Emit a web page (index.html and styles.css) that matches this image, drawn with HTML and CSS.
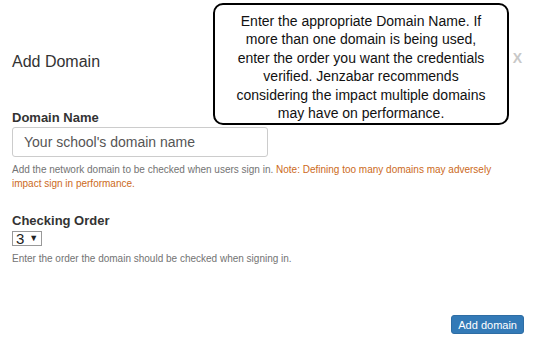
FILE: index.html
```html
<!DOCTYPE html>
<html lang="en">
<head>
    <meta charset="UTF-8">
    <title>Add Domain</title>
    <link rel="stylesheet" href="styles.css">
</head>
<body>
    <div class="modal">
        <div class="modal-header">
            <h4 class="modal-title">Add Domain</h4>
            <span class="close">X</span>
        </div>

        <div class="modal-body">
            <div class="form-group">
                <label for="domainName">Domain Name</label>
                <input type="text" id="domainName" placeholder="Your school's domain name">
                <p class="help">Add the network domain to be checked when users sign in. <span class="note">Note: Defining too many domains may adversely impact sign in performance.</span></p>
            </div>

            <div class="form-group order">
                <label for="checkingOrder">Checking Order</label>
                <div class="select-box" id="checkingOrder">
                    <span>3</span>
                    <span class="arrow">&#9660;</span>
                </div>
                <p class="help">Enter the order the domain should be checked when signing in.</p>
            </div>
        </div>

        <div class="modal-footer">
            <button class="btn-primary">Add domain</button>
        </div>
    </div>

    <div class="callout">
        Enter the appropriate Domain Name. If<br>
        more than one domain is being used,<br>
        enter the order you want the credentials<br>
        verified. Jenzabar recommends<br>
        considering the impact multiple domains<br>
        may have on performance.
    </div>
</body>
</html>
```

FILE: styles.css
```css
body {
    margin: 0;
    width: 536px;
    height: 348px;
    background: #fff;
    font-family: Arial, "Liberation Sans", sans-serif;
    color: #333;
    overflow: hidden;
}

.modal {
    margin-top: 30px;
}

.modal-header {
    display: flex;
    align-items: center;
    padding: 22px 14px 15px 12px;
}

.modal-title {
    margin: 0;
    font-size: 16px;
    font-weight: normal;
    line-height: 19px;
}

.close {
    margin-left: auto;
    margin-top: -7px;
    font-size: 14px;
    font-weight: bold;
    color: #c8c8c8;
}

.modal-body {
    padding: 24px 12px 0;
}

.form-group label {
    display: block;
    font-size: 13px;
    font-weight: bold;
    line-height: 15px;
    margin-bottom: 2px;
}

.form-group input {
    display: block;
    box-sizing: border-box;
    width: 256px;
    height: 30px;
    padding: 0 11px;
    border: 1px solid #ccc;
    border-radius: 3px;
    font-family: inherit;
    font-size: 14px;
}

.form-group input::placeholder {
    color: #555;
}

.help {
    max-width: 505px;
    margin: 6px 0 0;
    font-size: 10px;
    line-height: 14px;
    color: #737373;
}

.note {
    color: #cc6a22;
}

.order {
    margin-top: 22px;
}

.order label {
    margin-bottom: 3px;
}

.select-box {
    box-sizing: border-box;
    display: flex;
    align-items: center;
    gap: 5px;
    width: 30px;
    height: 15px;
    padding: 0 3px;
    border: 1px solid #999;
    font-size: 15px;
    line-height: 13px;
    color: #222;
}

.select-box .arrow {
    font-size: 9px;
}

.modal-footer {
    display: flex;
    justify-content: flex-end;
    padding: 49px 12px 0;
}

.btn-primary {
    height: 19px;
    padding: 0 6px;
    background: #337ab7;
    border: 1px solid #2e6da4;
    border-radius: 3px;
    color: #fff;
    font-family: inherit;
    font-size: 11px;
}

.callout {
    position: absolute;
    left: 213px;
    top: 3px;
    box-sizing: border-box;
    width: 296px;
    height: 122px;
    padding-top: 7px;
    border: 2px solid #000;
    border-radius: 10px;
    background: #fff;
    text-align: center;
    font-size: 14px;
    line-height: 18.4px;
    color: #111;
}
```
